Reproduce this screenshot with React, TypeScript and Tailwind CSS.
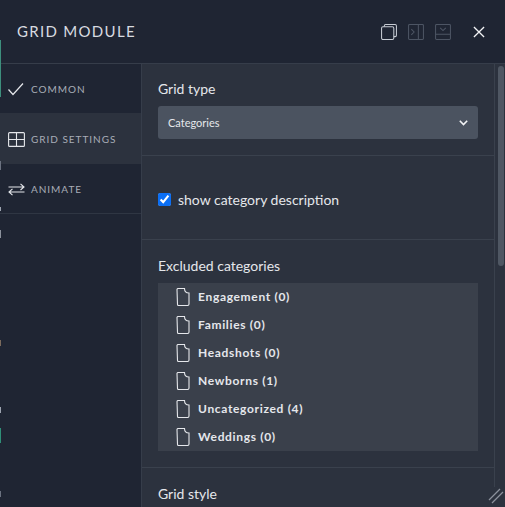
const categories = [
  "Engagement (0)",
  "Families (0)",
  "Headshots (0)",
  "Newborns (1)",
  "Uncategorized (4)",
  "Weddings (0)",
];

const FileIcon = () => (
  <svg width="14" height="18" viewBox="0 0 14 18" fill="none" stroke="#e5e7eb" strokeWidth="1.1" className="shrink-0">
    <path d="M1 1.5 a1 1 0 0 1 1-1 h6.5 c0 3 1.5 4.5 4.5 4.5 v11 a1.5 1.5 0 0 1-1.5 1.5 h-9 a1 1 0 0 1-1-1 z" />
  </svg>
);

const navItems = [
  {
    label: "COMMON",
    height: "h-[49px]",
    active: false,
    icon: (
      <svg width="18" height="14" viewBox="0 0 18 14" fill="none" stroke="#e5e7eb" strokeWidth="1.2">
        <path d="M1.5 7.5 L6 12.5 L16 1.5" />
      </svg>
    ),
  },
  {
    label: "GRID SETTINGS",
    height: "h-[51px]",
    active: true,
    icon: (
      <svg width="17" height="15" viewBox="0 0 17 15" fill="none" stroke="#e5e7eb" strokeWidth="1.1">
        <rect x="0.6" y="0.6" width="15.8" height="13.8" rx="1" />
        <path d="M8.5 0.6 V14.4 M0.6 7.5 H16.4" />
      </svg>
    ),
  },
  {
    label: "ANIMATE",
    height: "h-[49px]",
    active: false,
    icon: (
      <svg width="17" height="13" viewBox="0 0 17 13" fill="none" stroke="#e5e7eb" strokeWidth="1.1">
        <path d="M0.5 4 H16 M12.5 0.8 L16 4 L12.5 7 M16.5 9 H1 M4.5 5.8 L1 9 L4.5 12.2" />
      </svg>
    ),
  },
];

export default function App() {
  return (
    <div
      className="relative flex h-[507px] w-[505px] flex-col overflow-hidden bg-[#1f2533] text-[#e5e7eb]"
      style={{ fontFamily: "Lato, sans-serif" }}
    >
      {/* bits of the page behind the modal */}
      <div className="absolute top-[40px] left-0 h-[57px] w-px bg-[#3d8f7d]" />
      <div className="absolute top-[161px] left-0 h-[9px] w-px bg-[#6b7280]" />
      <div className="absolute top-[207px] left-0 h-[4px] w-px bg-[#9ca3af]" />
      <div className="absolute top-[230px] left-0 h-[8px] w-px bg-[#8b919c]" />
      <div className="absolute top-[340px] left-0 h-[6px] w-px bg-[#7a6a5c]" />
      <div className="absolute top-[407px] left-0 h-[6px] w-px bg-[#9ca3af]" />
      <div className="absolute top-[428px] left-0 h-[15px] w-px bg-[#2f8f78]" />
      <div className="absolute top-[491px] left-0 h-[6px] w-px bg-[#6b7280]" />

      {/* Header */}
      <div className="flex h-[64px] shrink-0 items-center border-b border-[#363d4a] pr-[20px] pl-[17px]">
        <h1 className="text-[15px] tracking-[1.3px] text-[#d8dbe0]">GRID MODULE</h1>
        <div className="ml-auto flex items-center">
          <svg width="16" height="16" viewBox="0 0 17 17" fill="none" stroke="#c7ccd4" strokeWidth="1.1">
            <rect x="0.6" y="3" width="13" height="13.4" rx="1.5" />
            <path d="M3.5 3 V2 a1.4 1.4 0 0 1 1.4-1.4 H15 a1.4 1.4 0 0 1 1.4 1.4 V12 a1.4 1.4 0 0 1-1.4 1.4 H13.6" />
          </svg>
          <svg width="16" height="16" viewBox="0 0 17 17" fill="none" stroke="#4d5564" strokeWidth="1.1" className="ml-[11px]">
            <rect x="0.6" y="0.6" width="15.8" height="15.8" rx="1" />
            <path d="M11 0.6 V16.4 M3.5 5.5 L6.5 8.5 L3.5 11.5" />
          </svg>
          <svg width="16" height="16" viewBox="0 0 17 17" fill="none" stroke="#4d5564" strokeWidth="1.1" className="ml-[11px]">
            <rect x="0.6" y="0.6" width="15.8" height="15.8" rx="1" />
            <path d="M0.6 11 H16.4 M5.5 4 L8.5 7 L11.5 4" />
          </svg>
          <svg width="12" height="12" viewBox="0 0 13 13" fill="none" stroke="#f3f4f6" strokeWidth="1.4" className="ml-[22px]">
            <path d="M1 1 L12 12 M12 1 L1 12" />
          </svg>
        </div>
      </div>

      <div className="flex min-h-0 flex-1">
        {/* Sidebar */}
        <div className="w-[142px] shrink-0 border-r border-[#363d4a]">
          <div className="border-b border-[#2f3643]">
            {navItems.map((item) => (
              <div
                key={item.label}
                className={`flex items-center pt-[1px] ${item.height} ${item.active ? "bg-[#2c323e]" : ""}`}
              >
                <div className="flex w-[31px] shrink-0 justify-center pl-[1px]">{item.icon}</div>
                <span className="text-[10px] tracking-[0.97px] text-[#a8adb7]">{item.label}</span>
              </div>
            ))}
          </div>
        </div>

        {/* Content */}
        <div className="relative flex-1 overflow-hidden bg-[#2c323e]">
          <div className="w-[352px]">
            <section className="h-[92px] border-b border-[#3a414d] px-[16px] pt-[15px]">
              <div className="text-[14px] leading-[19px] text-[#e5e7eb]">Grid type</div>
              <div className="mt-[8px] flex h-[33px] items-center justify-between rounded-[3px] bg-[#4b5360] px-[10px] pt-[1px] text-[11px] text-[#e5e7eb]">
                <span>Categories</span>
                <svg width="9" height="6" viewBox="0 0 9 6" fill="none" stroke="#f3f4f6" strokeWidth="1.6">
                  <path d="M0.8 0.8 L4.5 4.5 L8.2 0.8" />
                </svg>
              </div>
            </section>

            <section className="flex h-[84px] items-start border-b border-[#3a414d] pt-[37px] pl-[16px]">
              <input type="checkbox" defaultChecked className="h-[13px] w-[13px] accent-[#0b6ff5]" />
              <span className="ml-[7px] -translate-y-[2px] text-[14px] leading-[17px] text-[#e5e7eb]">
                show category description
              </span>
            </section>

            <section className="h-[228px] border-b border-[#3a414d] px-[16px] pt-[16px]">
              <div className="text-[14px] leading-[19px] text-[#e5e7eb]">Excluded categories</div>
              <div className="mt-[8px] h-[168px] bg-[#3a404b] pl-[18px]">
                {categories.map((name) => (
                  <div key={name} className="flex h-[28px] items-center">
                    <FileIcon />
                    <span className="ml-[8px] text-[12px] font-bold tracking-[0.67px] text-[#e5e7eb]">{name}</span>
                  </div>
                ))}
              </div>
            </section>

            <section className="px-[16px] pt-[16px]">
              <div className="text-[14px] leading-[19px] text-[#e5e7eb]">Grid style</div>
            </section>
          </div>

          {/* Scrollbar */}
          <div className="absolute top-0 right-0 bottom-[20px] w-[11px] border-l border-[#3a414d]">
            <div className="mt-[2px] ml-[3px] h-[200px] w-[6px] rounded-full bg-[#4f5763]" />
          </div>
          {/* Resize grip */}
          <svg width="16" height="16" viewBox="0 0 16 16" fill="none" stroke="#8b919c" strokeWidth="1.3" className="absolute right-[1px] bottom-[3px]">
            <path d="M1 12 L12 1 M4 15 L15 4" />
          </svg>
        </div>
      </div>
    </div>
  );
}
